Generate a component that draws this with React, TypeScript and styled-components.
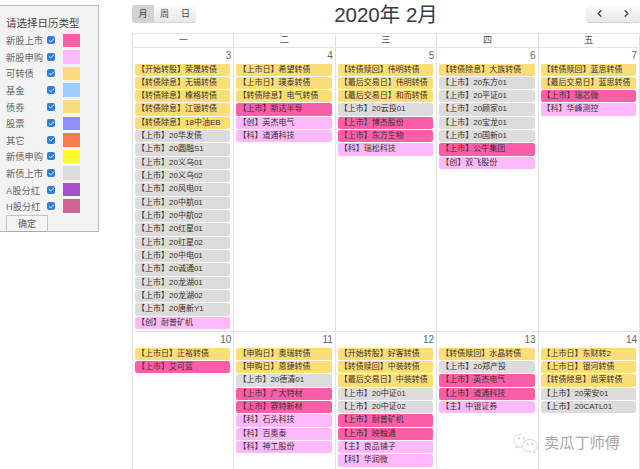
import React from "react";
import styled, { createGlobalStyle } from "styled-components";
import { Check, ChevronLeft, ChevronRight } from "lucide-react";

type Kind = "bond" | "listing" | "stock" | "ipo";

const eventColors: Record<Kind, string> = {
  bond: "#fddd78",
  listing: "#dcdcdc",
  stock: "#fb5ea9",
  ipo: "#fdb9fb",
};

const GlobalStyle = createGlobalStyle`
  html, body {
    margin: 0;
    background: #fff;
    overflow: hidden;
    font-family: "Liberation Sans", "Noto Sans CJK SC", sans-serif;
    color: #444;
  }
`;

const Page = styled.div`
  display: flex;
  align-items: flex-start;
  width: 640px;
  height: 469px;
  position: relative;
  overflow: hidden;
`;

const Panel = styled.aside`
  box-sizing: border-box;
  width: 99px;
  height: 227px;
  margin-top: 5px;
  padding: 11px 0 0 6px;
  background: #f3f3f3;
  border: 1px solid #b9b9b9;
  border-left: 0;
  flex-shrink: 0;
`;

const PanelTitle = styled.div`
  font-size: 10.5px;
  line-height: 12px;
  margin-bottom: 3px;
  white-space: nowrap;
`;

const FilterRow = styled.div`
  display: flex;
  align-items: center;
  height: 16.6px;
  font-size: 9.25px;
  color: #666;
`;

const FilterLabel = styled.span`
  width: 41px;
  white-space: nowrap;
`;

const CheckBox = styled.span`
  display: flex;
  align-items: center;
  justify-content: center;
  width: 8px;
  height: 8px;
  border-radius: 2px;
  background: #2f7fd6;
  color: #fff;
`;

const Swatch = styled.span<{ $color: string }>`
  width: 17px;
  height: 13.5px;
  margin-left: 8px;
  background: ${(p) => p.$color};
`;

const ConfirmButton = styled.button`
  display: block;
  box-sizing: border-box;
  width: 42px;
  height: 17px;
  padding: 0;
  background: #f4f4f4;
  border: 1px solid #c4c4c4;
  border-bottom-color: #aaa;
  font: inherit;
  font-size: 9px;
  color: #555;
`;

const Main = styled.main`
  width: 508px;
  margin-left: 33px;
  flex-shrink: 0;
`;

const Toolbar = styled.header`
  display: grid;
  grid-template-columns: 1fr auto 1fr;
  align-items: center;
  padding-top: 5px;
  box-sizing: border-box;
  height: 33px;
`;

const Title = styled.h2`
  margin: 0;
  font-size: 20.5px;
  font-weight: 400;
  line-height: 20px;
  color: #3a3a3a;
  position: relative;
  top: -4px;
`;

const ButtonGroup = styled.div<{ $end?: boolean }>`
  display: flex;
  height: 17px;
  justify-self: ${(p) => (p.$end ? "end" : "start")};
  margin-top: -11px;
  border-radius: 3px;
  box-shadow: 0 1px 1px rgba(0, 0, 0, 0.18);
  overflow: hidden;
`;

const ToolButton = styled.button<{ $active?: boolean; $width: number }>`
  display: flex;
  align-items: center;
  justify-content: center;
  width: ${(p) => p.$width}px;
  padding: 0;
  border: 0;
  font: inherit;
  font-size: 9px;
  color: #444;
  background: ${(p) =>
    p.$active ? "#d2d2d2" : "linear-gradient(#fbfbfb, #e8e8e8)"};
`;

const Calendar = styled.div`
  display: grid;
  grid-template-columns: repeat(5, 1fr);
  border-top: 1px solid #e3e3e3;
  border-left: 1px solid #e3e3e3;
`;

const WeekDay = styled.div`
  height: 13px;
  line-height: 13px;
  text-align: center;
  font-size: 9px;
  color: #555;
  border-right: 1px solid #e3e3e3;
  border-bottom: 1px solid #e3e3e3;
`;

const DayCell = styled.div`
  box-sizing: border-box;
  padding: 0 3px 1px 2px;
  border-right: 1px solid #e3e3e3;
  border-bottom: 1px solid #e3e3e3;
`;

const DayNumber = styled.div`
  height: 15.5px;
  line-height: 15px;
  text-align: right;
  font-size: 10px;
  color: #666;
  margin-right: -1px;
`;

const EventChip = styled.div<{ $kind: Kind }>`
  height: 12.33px;
  margin-bottom: 1px;
  padding-left: 2px;
  border-radius: 2px;
  background: ${(p) => eventColors[p.$kind]};
  font-size: 8px;
  line-height: 12.33px;
  color: #3b302c;
  white-space: nowrap;
  overflow: hidden;
`;

const Watermark = styled.div`
  position: absolute;
  left: 513px;
  top: 432px;
  display: flex;
  align-items: center;
  gap: 5px;
  font-size: 15.2px;
  line-height: 20px;
  color: #a8a8a8;
  white-space: nowrap;
`;

const filters: [string, string][] = [
  ["新股上市", "#fb5ea9"],
  ["新股申购", "#fdb9fb"],
  ["可转债", "#fddd78"],
  ["基金", "#9fcdfd"],
  ["债券", "#fddd78"],
  ["股票", "#8f8ffb"],
  ["其它", "#fc7a4e"],
  ["新债申购", "#fdfd2b"],
  ["新债上市", "#dcdcdc"],
  ["A股分红", "#a84fd0"],
  ["H股分红", "#cf6692"],
];

const weekDays = ["一", "二", "三", "四", "五"];

const b = (text: string): [Kind, string] => ["bond", text];
const l = (name: string): [Kind, string] => ["listing", `【上市】${name}`];
const s = (name: string): [Kind, string] => ["stock", `【上市】${name}`];
const i = (text: string): [Kind, string] => ["ipo", text];

const weeks: { day: number; events: [Kind, string][] }[][] = [
  [
    {
      day: 3,
      events: [
        b("【开始转股】荣晟转债"),
        b("【转债除息】无锡转债"),
        b("【转债除息】橡格转债"),
        b("【转债除息】江银转债"),
        b("【转债除息】18中油EB"),
        l("20华发债"),
        l("20圆融S1"),
        l("20义乌01"),
        l("20义乌02"),
        l("20风电01"),
        l("20中航01"),
        l("20中航02"),
        l("20红星01"),
        l("20红星02"),
        l("20中电01"),
        l("20诚通01"),
        l("20龙湖01"),
        l("20龙湖02"),
        l("20唐新Y1"),
        i("【创】耐普矿机"),
      ],
    },
    {
      day: 4,
      events: [
        b("【上市日】希望转债"),
        b("【上市日】璞泰转债"),
        b("【转债除息】电气转债"),
        s("斯达半导"),
        i("【创】英杰电气"),
        i("【科】道通科技"),
      ],
    },
    {
      day: 5,
      events: [
        b("【转债赎回】伟明转债"),
        b("【最后交易日】伟明转债"),
        b("【最后交易日】和而转债"),
        l("20云投01"),
        s("博杰股份"),
        s("东方生物"),
        i("【科】瑞松科技"),
      ],
    },
    {
      day: 6,
      events: [
        b("【转债除息】大族转债"),
        l("20东方01"),
        l("20平证01"),
        l("20顾家01"),
        l("20宝龙01"),
        l("20国新01"),
        s("公牛集团"),
        i("【创】双飞股份"),
      ],
    },
    {
      day: 7,
      events: [
        b("【转债赎回】蓝思转债"),
        b("【最后交易日】蓝思转债"),
        s("瑞芯微"),
        i("【科】华峰测控"),
      ],
    },
  ],
  [
    { day: 10, events: [b("【上市日】正裕转债"), s("艾可蓝")] },
    {
      day: 11,
      events: [
        b("【申购日】奥瑞转债"),
        b("【申购日】恩捷转债"),
        l("20德清01"),
        s("广大特材"),
        s("赛特新材"),
        i("【科】石头科技"),
        i("【科】百奥泰"),
        i("【科】神工股份"),
      ],
    },
    {
      day: 12,
      events: [
        b("【开始转股】好客转债"),
        b("【转债赎回】中装转债"),
        b("【最后交易日】中装转债"),
        l("20中证01"),
        l("20中证02"),
        s("耐普矿机"),
        s("映翰通"),
        i("【主】良品铺子"),
        i("【科】华润微"),
      ],
    },
    {
      day: 13,
      events: [
        b("【转债赎回】水晶转债"),
        l("20郑产投"),
        s("英杰电气"),
        s("道通科技"),
        i("【主】中银证券"),
      ],
    },
    {
      day: 14,
      events: [
        b("【上市日】东财转2"),
        b("【上市日】银河转债"),
        b("【转债除息】尚荣转债"),
        l("20荣安01"),
        l("20CATL01"),
      ],
    },
  ],
];

function WechatMark() {
  return (
    <svg width="26" height="22" viewBox="0 0 26 22" fill="none" stroke="#d4d4d4" strokeWidth="1">
      <path d="M9 2C4.500 2 1 5 1 8.600c0 2.100 1.100 3.900 3 5.100l-.8 2.500 2.900-1.500c1 .3 2 .4 3 .4" />
      <path d="M17 7.500c-4 0-7.500 2.700-7.500 6.200s3.500 6.200 7.500 6.200c.9 0 1.800-.1 2.600-.4l2.400 1.300-.6-2.200c1.800-1.100 3.100-2.900 3.100-4.900 0-3.500-3.500-6.200-7.500-6.200z" />
      <circle cx="6" cy="6.500" r=".8" fill="#d4d4d4" />
      <circle cx="11" cy="6.500" r=".8" fill="#d4d4d4" />
      <circle cx="14.500" cy="12" r=".7" fill="#d4d4d4" />
      <circle cx="19.500" cy="12" r=".7" fill="#d4d4d4" />
    </svg>
  );
}

export default function App() {
  return (
    <Page>
      <GlobalStyle />
      <Panel>
        <PanelTitle>请选择日历类型</PanelTitle>
        {filters.map(([label, color]) => (
          <FilterRow key={label}>
            <FilterLabel>{label}</FilterLabel>
            <CheckBox>
              <Check size={7} strokeWidth={3} />
            </CheckBox>
            <Swatch $color={color} />
          </FilterRow>
        ))}
        <ConfirmButton>确定</ConfirmButton>
      </Panel>

      <Main>
        <Toolbar>
          <ButtonGroup>
            <ToolButton $active $width={22}>月</ToolButton>
            <ToolButton $width={21}>周</ToolButton>
            <ToolButton $width={21}>日</ToolButton>
          </ButtonGroup>
          <Title>2020年 2月</Title>
          <ButtonGroup $end>
            <ToolButton $width={27}>
              <ChevronLeft size={11} strokeWidth={3} />
            </ToolButton>
            <ToolButton $width={27}>
              <ChevronRight size={11} strokeWidth={3} />
            </ToolButton>
          </ButtonGroup>
        </Toolbar>

        <Calendar>
          {weekDays.map((d) => (
            <WeekDay key={d}>{d}</WeekDay>
          ))}
          {weeks.flat().map((cell) => (
            <DayCell key={cell.day}>
              <DayNumber>{cell.day}</DayNumber>
              {cell.events.map(([kind, text]) => (
                <EventChip key={text} $kind={kind}>
                  {text}
                </EventChip>
              ))}
            </DayCell>
          ))}
        </Calendar>
      </Main>

      <Watermark>
        <WechatMark />
        卖瓜丁师傅
      </Watermark>
    </Page>
  );
}
